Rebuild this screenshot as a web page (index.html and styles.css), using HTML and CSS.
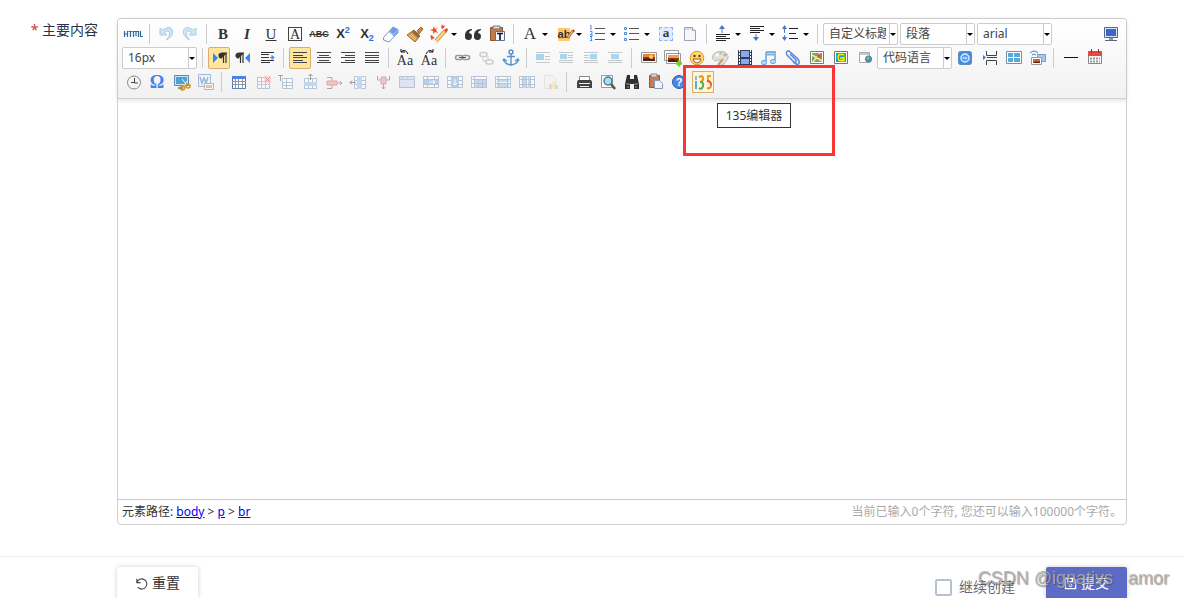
FILE: index.html
```html
<!DOCTYPE html>
<html lang="zh-CN">
<head>
<meta charset="utf-8">
<title>主要内容</title>
<link rel="stylesheet" href="styles.css">
</head>
<body>
<form class="page">
  <div class="field">
    <div class="field-label"><span class="required">*</span> 主要内容</div>
    <div class="editor">
      <div class="toolbar" role="toolbar" aria-label="编辑器工具栏">
        <div class="row">
          <button type="button" class="btn" aria-label="源代码"><svg viewBox="0 0 20 20"><path d="M1.500 7v6M4.500 7v6M1.500 10h3M5.500 7.500h4M7.500 7.500V13M10.500 13V7.500h5V13M13 7.500V12M17.500 7v5.500H20" fill="none" stroke="#2d6a9f" stroke-width="1.200"/></svg></button>
          <span class="sep"></span>
          <button type="button" class="btn" aria-label="撤销"><svg viewBox="0 0 20 20"><path d="M4 4v7h7L8.500 8.500q4-3 5 0t-3 7.500q7-4 6-9t-6-3-4 2z" fill="#cfe3f6" stroke="#a9cbea"/></svg></button>
          <button type="button" class="btn" aria-label="重做"><svg viewBox="0 0 20 20"><path d="M16 4v7H9l2.500-2.500q-4-3-5 0t3 7.500q-7-4-6-9t6-3 4 2z" fill="#cfe7f2" stroke="#a9d0e4"/></svg></button>
          <span class="sep"></span>
          <button type="button" class="btn glyph bold">B</button>
          <button type="button" class="btn glyph italic">I</button>
          <button type="button" class="btn glyph underline">U</button>
          <button type="button" class="btn glyph"><span class="framed">A</span></button>
          <button type="button" class="btn glyph strike">ABC</button>
          <button type="button" class="btn glyph script">X<sup>2</sup></button>
          <button type="button" class="btn glyph script">X<sub>2</sub></button>
          <button type="button" class="btn" aria-label="清除格式"><svg viewBox="0 0 20 20"><path d="M2.500 13.500 12 3l5 2.500v3L8 18l-5.500-2z" fill="#fff" stroke="#8296b8"/><path d="m8 8 4-5 5 2.500v3l-4 4z" fill="#6c9fe8"/><path d="m8 8 5 2.500 4-5" fill="none" stroke="#aac8f2"/></svg></button>
          <button type="button" class="btn" aria-label="格式刷"><svg viewBox="0 0 20 20"><path d="m12 7 4-4 2 2-4 5z" fill="#c98a4a" stroke="#9a6532"/><path d="m9 6 6 6-5 6-8-7z" fill="#d59a4c" stroke="#a3702f"/><path d="m9 6 6 6-2 2-6-6z" fill="#8c6848"/><path d="m4 11 6 5M6 10l5 5" stroke="#f4ce85"/></svg></button>
          <button type="button" class="btn split" aria-label="自动排版"><svg viewBox="0 0 20 20"><path d="m7 17 9-10" stroke="#d08a3c" stroke-width="4"/><path d="m7 17 9-10" stroke="#ffd98a" stroke-width="2"/><path d="m5 2 1 3 3-1-2 2 2 3-3-1-2 2V7L1 6l3-1zM13 0l1 2 2-1-1 3-2 1-1-2zM3 11l1 2 2 0-2 2-2 1v-2l-1-2z" fill="#f05328"/><path d="m15 6 3-2 1 2-2 3z" fill="#d94b35"/></svg></button>
          <button type="button" class="btn" aria-label="引用"><svg viewBox="0 0 20 20"><path d="M9 5C4 5 2 8 2 12a3.500 3.500 0 1 0 4-3q0-2 3-3zM18 5c-5 0-7 3-7 7a3.500 3.500 0 1 0 4-3q0-2 3-3z" fill="#333"/></svg></button>
          <button type="button" class="btn" aria-label="纯文本粘贴"><svg viewBox="0 0 20 20"><path d="M3.500 3.500h12v13h-12z" fill="#c17a4e" stroke="#935128"/><path d="M6 2h7v3H6z" fill="#ddd" stroke="#777"/><path d="M8.500 7.500h9v9h-9z" fill="#f7faff" stroke="#5e728d"/><path d="M10 9.500h6M13 10v6" stroke="#111" stroke-width="1.600"/></svg></button>
          <span class="sep"></span>
          <button type="button" class="btn split glyph color">A</button>
          <button type="button" class="btn split glyph highlight"><span>ab</span><svg class="pencil" viewBox="0 0 10 12"><path d="m2 10 6-8" stroke="#b97328" stroke-width="3"/><path d="m2 10 6-8" stroke="#ffe194"/><path d="m7 3 1-2 2 1-1 2z" fill="#d33"/></svg></button>
          <button type="button" class="btn split" aria-label="有序列表"><svg viewBox="0 0 20 20"><path d="M7 4.500h10M7 9.500h10M7 15.500h10" stroke="#555"/><path d="M2 1.500h1V6M2 7.500h2v2L2 11h3M2 12.500h2L3 14.500l1 2H2" fill="none" stroke="#4288e8"/></svg></button>
          <button type="button" class="btn split" aria-label="无序列表"><svg viewBox="0 0 20 20"><path d="M7 4.500h10M7 9.500h10M7 15.500h10" stroke="#555"/><path d="M2.500 3.500h2v2h-2zM2.500 8.500h2v2h-2zM2.500 14.500h2v2h-2z" fill="#eaf1ff" stroke="#4288e8"/></svg></button>
          <button type="button" class="btn glyph"><span class="selected">a</span></button>
          <button type="button" class="btn" aria-label="清空文档"><svg viewBox="0 0 20 20"><path d="M4.500 3.500h8l3 3v10h-11z" fill="#f6f7fa" stroke="#9da2ad"/><path d="M5 4h7v2H5z" fill="#cddcf2"/><path d="M12.500 3.500v3h3" fill="#fff" stroke="#9da2ad"/></svg></button>
          <span class="sep"></span>
          <button type="button" class="btn split" aria-label="段前距"><svg viewBox="0 0 20 20"><path d="M3 10.500h14M3 12.500h10M3 14.500h14M3 16.500h10" stroke="#222"/><path d="M9 9V5" stroke="#537fc5"/><path d="m6 5 3-4 3 4z" fill="#4677c4"/></svg></button>
          <button type="button" class="btn split" aria-label="段后距"><svg viewBox="0 0 20 20"><path d="M3 2.500h14M3 4.500h10M3 6.500h14M3 8.500h10" stroke="#222"/><path d="M9 10v4" stroke="#537fc5"/><path d="m6 13 3 4 3-4z" fill="#4677c4"/></svg></button>
          <button type="button" class="btn split" aria-label="行间距"><svg viewBox="0 0 20 20"><path d="M8 4.500h9M8 9.500h7M8 14.500h9" stroke="#222"/><path d="M3.500 4v12" stroke="#537fc5" stroke-dasharray="5 2"/><path d="m1 5 2.500-4L6 5zM1 13l2.500 4L6 13z" fill="#4677c4"/></svg></button>
          <span class="sep"></span>
          <span class="combo"><select aria-label="自定义标题"><option>自定义标题</option></select></span>
          <span class="combo"><select aria-label="段落格式"><option>段落</option></select></span>
          <span class="combo"><select aria-label="字体"><option>arial</option></select></span>
          <button type="button" class="btn last" aria-label="全屏"><svg viewBox="0 0 20 20"><path d="M3.500 3.500h13v10h-13z" fill="#dce6f4" stroke="#596981"/><path d="M5 5h10v7H5z" fill="#3a67ca"/><path d="M8 14h4v2H8z" fill="#8c98a8"/><path d="M4 16.500h12" stroke="#596981"/></svg></button>
        </div>
        <div class="row">
          <span class="combo"><select aria-label="字号"><option>16px</option></select></span>
          <span class="sep"></span>
          <button type="button" class="btn active" aria-label="从左向右输入"><svg viewBox="0 0 20 20"><path d="m4 5 5 5-5 5z" fill="#3d82ee"/><path d="M13 10a3 2.500 0 0 1 0-5h5M14.500 5v10M17 5v10" fill="#333" stroke="#333" stroke-width="1.200"/></svg></button>
          <button type="button" class="btn" aria-label="从右向左输入"><svg viewBox="0 0 20 20"><path d="m17 5-5 5 5 5z" fill="#3d82ee"/><path d="M6 10a3 2.500 0 0 1 0-5h5M7.500 5v10M10 5v10" fill="#333" stroke="#333" stroke-width="1.200"/></svg></button>
          <button type="button" class="btn" aria-label="首行缩进"><svg viewBox="0 0 20 20"><path d="M4 4.500h13M4 6.500h8M4 9.500h8M4 12.500h13M4 14.500h9" stroke="#333"/><path d="M13 9.500h4M15 7.500v4l2-2z" stroke="#4688ef" fill="#4688ef"/></svg></button>
          <span class="sep"></span>
          <button type="button" class="btn active" aria-label="居左对齐"><svg viewBox="0 0 20 20"><path d="M3 4.500h14M3 7.500h10M3 9.500h14M3 12.500h10M3 14.500h14" stroke="#444"/></svg></button>
          <button type="button" class="btn" aria-label="居中对齐"><svg viewBox="0 0 20 20"><path d="M3 4.500h14M5 7.500h10M3 9.500h14M5 12.500h10M3 14.500h14" stroke="#444"/></svg></button>
          <button type="button" class="btn" aria-label="居右对齐"><svg viewBox="0 0 20 20"><path d="M3 4.500h14M7 7.500h10M3 9.500h14M7 12.500h10M3 14.500h14" stroke="#444"/></svg></button>
          <button type="button" class="btn" aria-label="两端对齐"><svg viewBox="0 0 20 20"><path d="M3 4.500h14M3 7.500h14M3 9.500h14M3 12.500h14M3 14.500h14" stroke="#444"/></svg></button>
          <span class="sep"></span>
          <button type="button" class="btn glyph case"><span>Aa</span><svg viewBox="0 0 20 20"><path d="M6 4q4-4 7 2M6 1v3h4" fill="none" stroke="#111"/></svg></button>
          <button type="button" class="btn glyph case"><span>Aa</span><svg viewBox="0 0 20 20"><path d="M14 4q-4-4-7 2M14 1v3h-4" fill="none" stroke="#111"/></svg></button>
          <span class="sep"></span>
          <button type="button" class="btn" aria-label="超链接"><svg viewBox="0 0 20 20"><rect x="3.500" y="7.500" width="7" height="4" rx="2" fill="none" stroke="#999" stroke-width="1.600"/><rect x="10.500" y="7.500" width="7" height="4" rx="2" fill="none" stroke="#999" stroke-width="1.600"/><path d="M7 9.500h7" stroke="#555"/></svg></button>
          <button type="button" class="btn" aria-label="取消链接"><svg viewBox="0 0 20 20"><rect x="4" y="4.500" width="7" height="4" rx="2" fill="none" stroke="#ccc" stroke-width="1.600"/><rect x="10" y="12" width="7" height="4" rx="2" fill="none" stroke="#ccc" stroke-width="1.600"/><path d="M12 8v4M7 10v3h3" fill="none" stroke="#ccc"/></svg></button>
          <button type="button" class="btn" aria-label="锚点"><svg viewBox="0 0 20 20"><circle cx="11" cy="4" r="2" fill="none" stroke="#5592ca" stroke-width="1.500"/><path d="M11 6v11M7 8.500h8M4 11q0 5 7 6 7-1 7-6M3 13l1-2 3 2M15 13l3-2 1 2" fill="none" stroke="#5592ca" stroke-width="1.400"/></svg></button>
          <span class="sep"></span>
          <button type="button" class="btn" aria-label="默认"><svg viewBox="0 0 20 20"><path d="M3 4.500h14M12 8.500h5M12 11.500h5M3 14.500h14" stroke="#c7c7c7"/><path d="M3 6h8v6H3z" fill="#a8d6ee"/></svg></button>
          <button type="button" class="btn" aria-label="左浮动"><svg viewBox="0 0 20 20"><path d="M2 4.500h14M11 7.500h5M11 9.500h5M2 12.500h14M2 14.500h14" stroke="#c7c7c7"/><path d="M3 6h7v5H3z" fill="#a8d6ee"/></svg></button>
          <button type="button" class="btn" aria-label="右浮动"><svg viewBox="0 0 20 20"><path d="M3 4.500h14M3 7.500h5M3 9.500h5M3 12.500h14M3 14.500h14" stroke="#c7c7c7"/><path d="M9 6h7v5H9z" fill="#a8d6ee"/></svg></button>
          <button type="button" class="btn" aria-label="居中"><svg viewBox="0 0 20 20"><path d="M3 4.500h14M3 12.500h14M3 14.500h14" stroke="#c7c7c7"/><path d="M6 6h8v5H6z" fill="#a8d6ee"/></svg></button>
          <span class="sep"></span>
          <button type="button" class="btn" aria-label="单图上传"><svg viewBox="0 0 20 20"><path d="M3.500 4.500h15v10h-15z" fill="#fff" stroke="#999"/><path d="M5 6h12v7H5z" fill="#933b13"/><path d="M5 6h12v3H5z" fill="#e3873b"/><circle cx="13" cy="9" r="2" fill="#ffd36a"/><path d="m5 11 5-1 7 2v1H5z" fill="#4c2112"/></svg></button>
          <button type="button" class="btn" aria-label="多图上传"><svg viewBox="0 0 20 20"><path d="M2.500 2.500h14v10h-14zM4.500 5.500h14v10h-14z" fill="#fff" stroke="#999"/><path d="M6 7h11v7H6z" fill="#933b13"/><path d="M6 7h11v3H6z" fill="#f0a04b"/><path d="m6 12 5-1 6 2v1H6z" fill="#4c2112"/><path d="M14 15.500h6M17 12.500v6" stroke="#76cf24" stroke-width="2.600"/></svg></button>
          <button type="button" class="btn" aria-label="表情"><svg viewBox="0 0 20 20"><circle cx="11" cy="10" r="6.800" fill="#ffda6a" stroke="#e1932e"/><circle cx="8.500" cy="8" r="1.300" fill="#754516"/><circle cx="13.500" cy="8" r="1.300" fill="#754516"/><path d="M7 11h8q-1 4-4 4t-4-4z" fill="#fff" stroke="#9a571c"/></svg></button>
          <button type="button" class="btn" aria-label="涂鸦"><svg viewBox="0 0 20 20"><path d="M5 13c-2-1-4-4-1-7s10-4 13 0-1 7-3 10-6 1-4-2-1-2-5-1z" fill="#e1e0d9" stroke="#b8b7af"/><path d="m13 11-5 6" stroke="#caa071" stroke-width="2"/><circle cx="7" cy="7" r="1.500" fill="#fff"/><circle cx="11" cy="5" r="1.500" fill="#b1c9a4"/><circle cx="15" cy="7" r="1.500" fill="#d09f91"/></svg></button>
          <button type="button" class="btn" aria-label="视频"><svg viewBox="0 0 20 20"><path d="M4 2h14v15H4z" fill="#333d55"/><path d="M7 3h8v6H7zM7 11h8v5H7z" fill="#87a9ed"/><path d="M5.500 2v15M16.500 2v15" stroke="#fff" stroke-dasharray="2 1"/></svg></button>
          <button type="button" class="btn" aria-label="音乐"><svg viewBox="0 0 20 20"><path d="M8 4h9v9M8 4v10M8 6.500h9" fill="none" stroke="#7fb1df" stroke-width="1.800"/><ellipse cx="6" cy="14.500" rx="2.600" ry="2.200" fill="#b5d9f4" stroke="#6da4d9"/><ellipse cx="15" cy="13.500" rx="2.600" ry="2.200" fill="#b5d9f4" stroke="#6da4d9"/></svg></button>
          <button type="button" class="btn" aria-label="附件"><svg viewBox="0 0 20 20"><path d="m8 6 6 6q1 3-2 2L5 7q-2-4 2-4l9 8q3 5-1 5.500L11 14" fill="none" stroke="#568bdc" stroke-width="1.500"/></svg></button>
          <button type="button" class="btn" aria-label="百度地图"><svg viewBox="0 0 20 20"><path d="M4.500 3.500h13v12h-13z" fill="#fff" stroke="#777"/><path d="M6 5h10v9H6z" fill="#70ac55"/><path d="m6 7 10 6M14 5l-7 9" stroke="#ffe4a0" stroke-width="1.500"/><circle cx="13" cy="8" r="2" fill="#dd5545"/></svg></button>
          <button type="button" class="btn" aria-label="Google地图"><svg viewBox="0 0 20 20"><path d="M4.500 3.500h13v12h-13z" fill="#fff" stroke="#777"/><path d="M6 5h10v9H6z" fill="#00a9dd"/><path d="M15 5v9h-5z" fill="#78bd21"/><path d="M14 6.500H9q-2 3 0 6h5V10h-4" fill="none" stroke="#ffe500" stroke-width="1.400"/></svg></button>
          <button type="button" class="btn" aria-label="插入Iframe"><svg viewBox="0 0 20 20"><path d="M5.500 4.500h10v10h-10z" fill="#fff" stroke="#aaa"/><path d="M6 5h9v2H6z" fill="#c6cad0"/><circle cx="14.500" cy="11" r="3.500" fill="#4289b9"/><path d="m14 8 2 2-2 3-2-3z" fill="#85b65c"/></svg></button>
          <span class="combo code"><select aria-label="代码语言"><option>代码语言</option></select></span>
          <button type="button" class="btn" aria-label="百度应用"><svg viewBox="0 0 20 20"><rect x="3.500" y="3.500" width="13" height="13" rx="2" fill="#438bdf" stroke="#5f8cba"/><circle cx="10" cy="10" r="4" fill="#5aa0ec" stroke="#d5e8ff" stroke-width="1.500"/><path d="M8 10h4" stroke="#fff"/></svg></button>
          <button type="button" class="btn" aria-label="分页"><svg viewBox="0 0 20 20"><path d="M7.500 3v4.500h10V3M7.500 17v-4.500h10V17M8 9.500h10" fill="none" stroke="#444"/><path d="m4 7 3 2.500L4 12z" fill="#3c75d2"/></svg></button>
          <button type="button" class="btn" aria-label="模板"><svg viewBox="0 0 20 20"><path d="M3.500 3.500h15v12h-15z" fill="#fff" stroke="#788fa4"/><path d="M5 5h5v4H5zM5 10h5v4H5zM11 5h6v4h-6zM11 10h6v4h-6z" fill="#57a8dc"/></svg></button>
          <button type="button" class="btn" aria-label="背景"><svg viewBox="0 0 20 20"><path d="M10.500 6.500h8v7h-8z" fill="#a8c6f2" stroke="#7d9ac5"/><path d="M3 5q4-4 8 0M5 7q2-2 4 0" fill="none" stroke="#4685c2"/><path d="M4.500 9.500h10v7h-10z" fill="#fff" stroke="#999"/><path d="M6 11h7v4H6z" fill="#d56822"/><path d="m6 15 3-2 2 1 2-1v2z" fill="#622515"/></svg></button>
          <span class="sep"></span>
          <button type="button" class="btn" aria-label="分隔线"><svg viewBox="0 0 20 20"><path d="M4 9.500h14" stroke="#111"/></svg></button>
          <button type="button" class="btn" aria-label="日期"><svg viewBox="0 0 20 20"><path d="M4.500 4.500h13v11h-13z" fill="#fff" stroke="#888"/><path d="M4 3h14v5H4z" fill="#ec4641"/><path d="M7.500 1v4M14.500 1v4" stroke="#9c2824"/><path d="M6 10.500h10M6 13.500h10" stroke="#999" stroke-width="2" stroke-dasharray="2 1"/></svg></button>
        </div>
        <div class="row">
          <button type="button" class="btn" aria-label="时间"><svg viewBox="0 0 20 20"><circle cx="11" cy="10.500" r="6.500" fill="#f6f6f6" stroke="#888"/><path d="M11.500 6v5H15M8 10.500h3" fill="none" stroke="#444"/></svg></button>
          <button type="button" class="btn glyph omega">Ω</button>
          <button type="button" class="btn" aria-label="截图"><svg viewBox="0 0 20 20"><path d="M3.500 3.500h14v10h-14z" fill="#c8e4f5" stroke="#5c8aaf"/><path d="M5 5h11v7H5z" fill="#4ba2d3"/><path d="M7 15h5v2H7z" fill="#7995a9"/><path d="m11 7 5 6M16 9l-4 6" stroke="#eef7fb"/><circle cx="11.500" cy="16" r="2" fill="none" stroke="#d3921b" stroke-width="1.500"/><circle cx="17" cy="14" r="2" fill="none" stroke="#d3921b" stroke-width="1.500"/></svg></button>
          <button type="button" class="btn faded" aria-label="图片转存"><svg viewBox="0 0 20 20"><path d="M3.500 2.500h12v12h-12z" fill="#eaf2ff" stroke="#527fbc"/><path d="m5 5 2 6 2-5 2 5 2-6" fill="none" stroke="#4777ba" stroke-width="1.500"/><path d="M9.500 11.500h9v6h-9z" fill="#fff" stroke="#777"/><path d="M11 13h6v3h-6z" fill="#e48b48"/></svg></button>
          <span class="sep"></span>
          <button type="button" class="btn" aria-label="插入表格"><svg viewBox="0 0 20 20"><path d="M4.500 4.500h13v12h-13z" fill="#fff" stroke="#5879ae"/><path d="M4 4h14v3H4z" fill="#4f83df"/><path d="M4 9.500h14M4 12.500h14M7.500 7v10M10.500 7v10M14.500 7v10" stroke="#8795aa"/></svg></button>
          <button type="button" class="btn faded" aria-label="删除表格"><svg viewBox="0 0 20 20"><path d="M5.500 5.500h12v11h-12z" fill="#fff" stroke="#7895bd"/><path d="M5 9.500h13M5 12.500h13M9.500 6v11M13.500 6v11" stroke="#8aa1c2"/><path d="M12 4h7v7h-7z" fill="#f5baba"/><path d="m13 5 5 5m0-5-5 5" stroke="#c53030"/></svg></button>
          <button type="button" class="btn faded" aria-label="表格前插入行"><svg viewBox="0 0 20 20"><path d="M2 3.500h5M4.500 3v6" stroke="#555"/><path d="M6.500 6.500h10v10h-10z" fill="#fff" stroke="#7895bd"/><path d="M6 10.500h11M6 13.500h11M10.500 6v11" stroke="#7895bd"/></svg></button>
          <button type="button" class="btn faded" aria-label="前插入行"><svg viewBox="0 0 20 20"><path d="M4.500 6.500h12v10h-12zM8.500 6v11M12.500 6v11" fill="#fff" stroke="#7895bd"/><path d="M4 10h13v4H4z" fill="#8dbfe9"/><path d="M10.500 8V2m-2 2 2-2 2 2" fill="none" stroke="#444"/></svg></button>
          <button type="button" class="btn faded" aria-label="删除行"><svg viewBox="0 0 20 20"><path d="M3 5.500h5v3M3 16.500h5v-3" fill="none" stroke="#666"/><path d="M3 9h10v4H3z" fill="#f19898" stroke="#c85a5a"/><path d="M14 11h4m-2-2 2 2-2 2" fill="none" stroke="#666"/></svg></button>
          <button type="button" class="btn faded" aria-label="前插入列"><svg viewBox="0 0 20 20"><path d="M6.500 4.500h11v12h-11zM6 8.500h12M6 12.500h12" fill="#fff" stroke="#7895bd"/><path d="M9 4h5v13H9z" fill="#8dbfe9"/><path d="M8 10.500H2m2-2-2 2 2 2" fill="none" stroke="#444"/></svg></button>
          <button type="button" class="btn faded" aria-label="删除列"><svg viewBox="0 0 20 20"><path d="M5.500 4v4H9M17.500 4v4H14" fill="none" stroke="#666"/><path d="M9 5h5v7H9z" fill="#f19898" stroke="#c85a5a"/><path d="M11.500 12v5m-2-2 2 2 2-2" fill="none" stroke="#666"/></svg></button>
          <button type="button" class="btn faded" aria-label="合并单元格"><svg viewBox="0 0 20 20"><path d="M3.500 4.500h15v11h-15z" fill="#cbd5f2" stroke="#7895bd"/><path d="M3 7.500h16M6.500 4v4M11.500 4v4" stroke="#8aa1c2"/></svg></button>
          <button type="button" class="btn faded" aria-label="右合并单元格"><svg viewBox="0 0 20 20"><path d="M3.500 4.500h15v11h-15zM3 7.500h16M3 12.500h16M7.500 4v12M14.500 4v12" fill="#fff" stroke="#7895bd"/><path d="M4 8h14v4H4z" fill="#78abdf"/><path d="M9 10h6m-2-2 2 2-2 2" fill="none" stroke="#fff"/></svg></button>
          <button type="button" class="btn faded" aria-label="下合并单元格"><svg viewBox="0 0 20 20"><path d="M3.500 4.500h15v11h-15zM3 8.500h16M3 12.500h16" fill="#fff" stroke="#7895bd"/><path d="M7 5h8v10H7z" fill="#78abdf"/><path d="M11 7v6m-2-2 2 2 2-2" fill="none" stroke="#fff"/></svg></button>
          <button type="button" class="btn faded" aria-label="拆分单元格"><svg viewBox="0 0 20 20"><path d="M3.500 4.500h15v11h-15z" fill="#fff" stroke="#7895bd"/><path d="M7 8h11v7H7z" fill="#a9b8eb"/><path d="M3 7.500h16M3 11.500h16M6.500 4v12M10.500 7v9M14.500 7v9" stroke="#7895bd"/></svg></button>
          <button type="button" class="btn faded" aria-label="拆分成行"><svg viewBox="0 0 20 20"><path d="M3.500 4.500h15v11h-15z" fill="#fff" stroke="#7895bd"/><path d="M5 7h12v3H5zM5 12h12v3H5z" fill="#92c2ed"/><path d="M3 7.500h16M3 11.500h16M6.500 4v12M15.500 4v12" stroke="#7895bd"/></svg></button>
          <button type="button" class="btn faded" aria-label="拆分成列"><svg viewBox="0 0 20 20"><path d="M3.500 4.500h15v11h-15z" fill="#fff" stroke="#7895bd"/><path d="M7 5h3v11H7zM12 5h3v11h-3z" fill="#92c2ed"/><path d="M3 7.500h16M3 12.500h16M6.500 4v12M10.500 4v12M14.500 4v12" stroke="#7895bd"/></svg></button>
          <button type="button" class="btn faded" aria-label="图表"><svg viewBox="0 0 20 20"><path d="M4.500 3.500h8l3 3v10h-11z" fill="#f2f2f2" stroke="#d5d5d5"/><path d="M9 12h3v5H9z" fill="#e8b3a8"/><path d="M12 10h3v7h-3z" fill="#efdf9c"/><path d="M15 13h3v4h-3z" fill="#a9d3a3"/></svg></button>
          <span class="sep"></span>
          <button type="button" class="btn" aria-label="打印"><svg viewBox="0 0 20 20"><path d="M6.500 4.500h10v4h-10z" fill="#fff" stroke="#888"/><path d="M5 8h13l1 2v6H4v-6z" fill="#444"/><path d="M6 11.500h11M7 14.500h9" stroke="#eee"/></svg></button>
          <button type="button" class="btn" aria-label="预览"><svg viewBox="0 0 20 20"><path d="M4.500 3.500h11v12h-11z" fill="#fff" stroke="#999"/><circle cx="11" cy="9" r="4" fill="#a9dcf5" stroke="#527a92" stroke-width="1.500"/><path d="m14 12 4 5" stroke="#555" stroke-width="2.500"/></svg></button>
          <button type="button" class="btn" aria-label="查询替换"><svg viewBox="0 0 20 20"><path d="M6 3h3v4h4V3h3l2 9v5h-5v-5H9v5H4v-5z" fill="#2f2f2f"/><path d="M5 12h4M13 12h4M6 15h2M14 15h2" stroke="#999"/></svg></button>
          <button type="button" class="btn" aria-label="粘贴"><svg viewBox="0 0 20 20"><path d="M4.500 3.500h10v12h-10z" fill="#c77c51" stroke="#9b5631"/><path d="M6 2h6v3H6z" fill="#ddd" stroke="#888"/><path d="M9.500 8.500h5l3 3v5h-8z" fill="#f1f5ff" stroke="#8b98b3"/></svg></button>
          <button type="button" class="btn help glyph"><span>?</span></button>
          <button type="button" class="btn hovered" aria-label="135编辑器" aria-describedby="tip-135"><svg viewBox="0 0 20 20"><g fill="none" stroke-width="2"><path d="M3 9v8" stroke="#55a9e9"/><path d="M3 4v4" stroke="#74c5ec"/><path d="M6 5q4-2 4 1.500T7 10" stroke="#eb8a21"/><path d="M7 10q4 0 3 4t-4 2" stroke="#4caf50"/><path d="M18 4h-3v5" stroke="#f0a020"/><path d="M14 9q4 0 4 4" stroke="#e5512d"/><path d="M18 13q0 4-4 3" stroke="#e58a2d"/></g></svg></button>
        </div>
      </div>
      <div class="content" contenteditable="true" role="textbox" aria-label="主要内容"></div>
      <div class="statusbar">
        <div class="path">元素路径: <a href="#body">body</a> &gt; <a href="#p">p</a> &gt; <a href="#br">br</a></div>
        <div class="count">当前已输入0个字符, 您还可以输入100000个字符。</div>
      </div>
      <div class="callout"><div class="tooltip" id="tip-135" role="tooltip">135编辑器</div></div>
    </div>
  </div>
  <div class="actions">
    <button type="reset" class="action"><svg viewBox="0 0 14 14"><path d="M2 2v4h4M2 6a5.500 5.500 0 1 1 1 5" fill="none" stroke="#444" stroke-width="1.200"/></svg>重置</button>
    <label class="keep"><input type="checkbox">继续创建</label>
    <button type="submit" class="action primary"><svg viewBox="0 0 14 14"><path d="M1.500 1.500h9l2 2v9h-11zM4 2v3h5V2" fill="none" stroke="#fff" stroke-width="1.400"/><circle cx="7" cy="9" r="1.500" fill="none" stroke="#fff"/></svg>提交</button>
    <div class="watermark">CSDN @ignativs&nbsp;&nbsp;&nbsp;amor</div>
  </div>
</form>
</body>
</html>
```
FILE: styles.css
```css
* {
  box-sizing: border-box;
}

html,
body {
  height: 100%;
}

body {
  margin: 0;
  overflow: hidden;
  background: #fff;
  color: #333;
  font: 12px/20px "Noto Sans", "Noto Sans CJK SC", sans-serif;
}

button,
select {
  font: inherit;
  color: inherit;
}

.field {
  display: flex;
  gap: 19px;
  padding: 18px 57px 31px 0;
}

.field-label {
  flex: 0 0 98px;
  padding-top: 2px;
  text-align: right;
  font-size: 14px;
  color: #2c3548;
}

.required {
  color: #d43b34;
}

.editor {
  position: relative;
  flex: 1;
  min-width: 0;
  border: 1px solid #d0d0d0;
  border-radius: 4px;
}

.toolbar {
  display: flex;
  flex-direction: column;
  gap: 2px;
  padding: 4px 4px 5px;
  border-bottom: 1px solid #d0d0d0;
  border-radius: 4px 4px 0 0;
  background: linear-gradient(#fff, #f1f1f1);
  box-shadow: 0 1px 4px rgba(180, 180, 180, 0.5);
}

.row {
  display: flex;
  gap: 2px;
  height: 22px;
}

.btn {
  position: relative;
  flex: none;
  width: 22px;
  height: 22px;
  padding: 0;
  border: 1px solid transparent;
  background: none;
  line-height: 20px;
  text-align: center;
}

.btn > svg {
  display: block;
  width: 20px;
  height: 20px;
}

.split {
  width: 32px;
  padding-right: 10px;
}

.split::after {
  content: "";
  position: absolute;
  right: 2px;
  top: 9px;
  border: 3px solid transparent;
  border-top-color: #000;
  border-bottom: 0;
}

.active,
.hovered {
  border-color: #dcac6c;
  border-radius: 2px;
  background: #ffe69f;
}

.hovered {
  border-radius: 0;
  background: #fff5d4;
}

.faded svg {
  opacity: 0.5;
}

.last {
  margin-left: auto;
}

.sep {
  flex: none;
  width: 1px;
  height: 20px;
  margin: 1px 3px 0;
  background: #ccc;
}

.glyph {
  display: flex;
  align-items: center;
  justify-content: center;
  font-family: "Liberation Serif", serif;
  font-size: 15px;
  color: #333;
}

.bold {
  font-weight: bold;
}

.italic {
  font-style: italic;
  font-weight: bold;
}

.underline {
  text-decoration: underline;
}

.framed {
  width: 14px;
  height: 14px;
  border: 1px solid #444;
  font-size: 14px;
  line-height: 13px;
}

.strike {
  font: bold 9px/20px "Liberation Sans", sans-serif;
  text-decoration: line-through;
}

.script {
  font: bold 13px/20px "Liberation Sans", sans-serif;
}

.script sup,
.script sub {
  font-size: 9px;
  line-height: 9px;
  color: #2f6ae0;
}

.script sup {
  padding-bottom: 8px;
}

.script sub {
  padding-top: 8px;
}

.color {
  font-size: 17px;
}

.highlight {
  font: bold 11px/13px "Liberation Sans", sans-serif;
}

.highlight span {
  background: #ffc66d;
}

.highlight .pencil {
  position: absolute;
  left: 12px;
  top: 4px;
  width: 9px;
  height: 12px;
}

.selected {
  width: 14px;
  height: 14px;
  border: 1px dashed #8ab3f3;
  background: #dfebff;
  font: bold 13px/10px "Liberation Serif", serif;
}

.case {
  align-items: flex-end;
  font-size: 14px;
  line-height: 15px;
}

.case svg {
  position: absolute;
  left: 0;
  top: 0;
}

.omega {
  font-size: 18px;
  font-weight: bold;
  color: #3f82f0;
}

.help span {
  width: 14px;
  height: 14px;
  border: 1px solid #2e58b5;
  border-radius: 50%;
  background: #4e86e8;
  color: #fff;
  font: bold 11px/12px "Liberation Sans", sans-serif;
}

.combo {
  position: relative;
  flex: none;
  width: 75px;
  height: 22px;
  border: 1px solid #ccc;
  border-radius: 2px;
  background: #fff;
}

.combo select {
  display: block;
  width: 66px;
  height: 20px;
  padding: 0 3px 0 5px;
  border: 0;
  border-right: 1px solid #ccc;
  background: none;
  appearance: none;
  line-height: 20px;
  color: #444;
}

.combo::after {
  content: "";
  position: absolute;
  right: 1px;
  top: 9px;
  border: 3px solid transparent;
  border-top-color: #000;
  border-bottom: 0;
}

.content {
  height: 400px;
  outline: 0;
}

.statusbar {
  display: flex;
  justify-content: space-between;
  padding: 2px 4px;
  border-top: 1px solid #ccc;
}

.path a {
  color: #00e;
}

.count {
  color: #aaa;
}

.callout {
  position: absolute;
  left: 565px;
  top: 46px;
  width: 152px;
  height: 91px;
  padding: 35px 0 0 31px;
  border: 3px solid #f93535;
}

.tooltip {
  width: 74px;
  border: 1px solid #333;
  background: #fff;
  line-height: 23px;
  text-align: center;
}

.actions {
  position: relative;
  display: flex;
  align-items: flex-start;
  padding: 10px 57px 0 117px;
  border-top: 1px solid #f0f0f0;
}

.action {
  display: flex;
  align-items: center;
  justify-content: center;
  gap: 4px;
  width: 81px;
  height: 32px;
  border: 0;
  border-radius: 2px;
  background: #fff;
  box-shadow: 0 0 5px rgba(0, 0, 0, 0.2);
  font-size: 14px;
}

.action svg {
  width: 13px;
  height: 13px;
}

.primary {
  background: #5c6bc6;
  color: #fff;
}

.keep {
  display: flex;
  align-items: center;
  gap: 7px;
  height: 40px;
  margin: 0 31px 0 auto;
  font-size: 14px;
  color: #667;
}

.keep input {
  width: 17px;
  height: 17px;
  margin: 0;
  border: 2px solid #b5c1d0;
  border-radius: 2px;
  background: #fff;
  appearance: none;
}

.watermark {
  position: absolute;
  right: 15px;
  top: 8px;
  color: rgba(175, 175, 175, 0.85);
  font: 18px/26px "Liberation Sans", sans-serif;
  text-shadow: 1px 1px 1px rgba(60, 60, 60, 0.5);
}
```
